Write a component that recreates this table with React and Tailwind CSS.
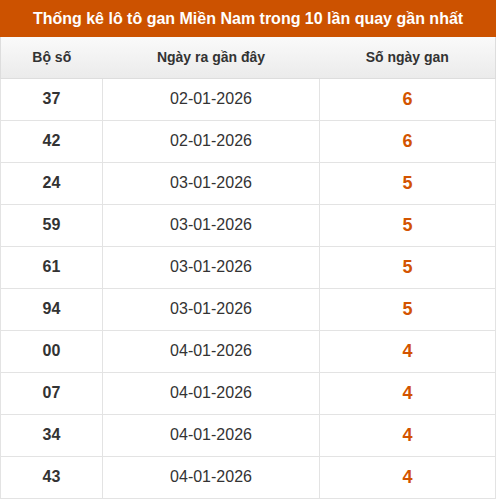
const rows = [
  ['37', '02-01-2026', 6],
  ['42', '02-01-2026', 6],
  ['24', '03-01-2026', 5],
  ['59', '03-01-2026', 5],
  ['61', '03-01-2026', 5],
  ['94', '03-01-2026', 5],
  ['00', '04-01-2026', 4],
  ['07', '04-01-2026', 4],
  ['34', '04-01-2026', 4],
  ['43', '04-01-2026', 4],
]

export default function App() {
  return (
    <div className="w-[496px] bg-white font-['Liberation_Sans',Arial,sans-serif] text-[#333]">
      <div className="h-[37px] bg-[#cc5200] flex items-center justify-center text-white font-bold text-[16px]">
        Thống kê lô tô gan Miền Nam trong 10 lần quay gần nhất
      </div>
      <table className="w-full border-collapse table-fixed">
        <colgroup>
          <col className="w-[102px]" />
          <col className="w-[217px]" />
          <col />
        </colgroup>
        <thead>
          <tr className="h-[41px] bg-gradient-to-b from-[#fafafa] to-[#ebebeb] text-[14px] font-bold">
            <th className="border border-[#ddd] border-t-0 border-r-0">Bộ số</th>
            <th className="border border-[#ddd] border-t-0 border-x-0">Ngày ra gần đây</th>
            <th className="border border-[#ddd] border-t-0 border-l-0">Số ngày gan</th>
          </tr>
        </thead>
        <tbody>
          {rows.map(([num, date, gan]) => (
            <tr key={num} className="h-[42px] text-center">
              <td className="border border-[#e3e3e3] font-bold text-[16px]">{num}</td>
              <td className="border border-[#e3e3e3] text-[16px]">{date}</td>
              <td className="border border-[#e3e3e3] font-bold text-[18px] text-[#d35400]">{gan}</td>
            </tr>
          ))}
        </tbody>
      </table>
    </div>
  )
}
